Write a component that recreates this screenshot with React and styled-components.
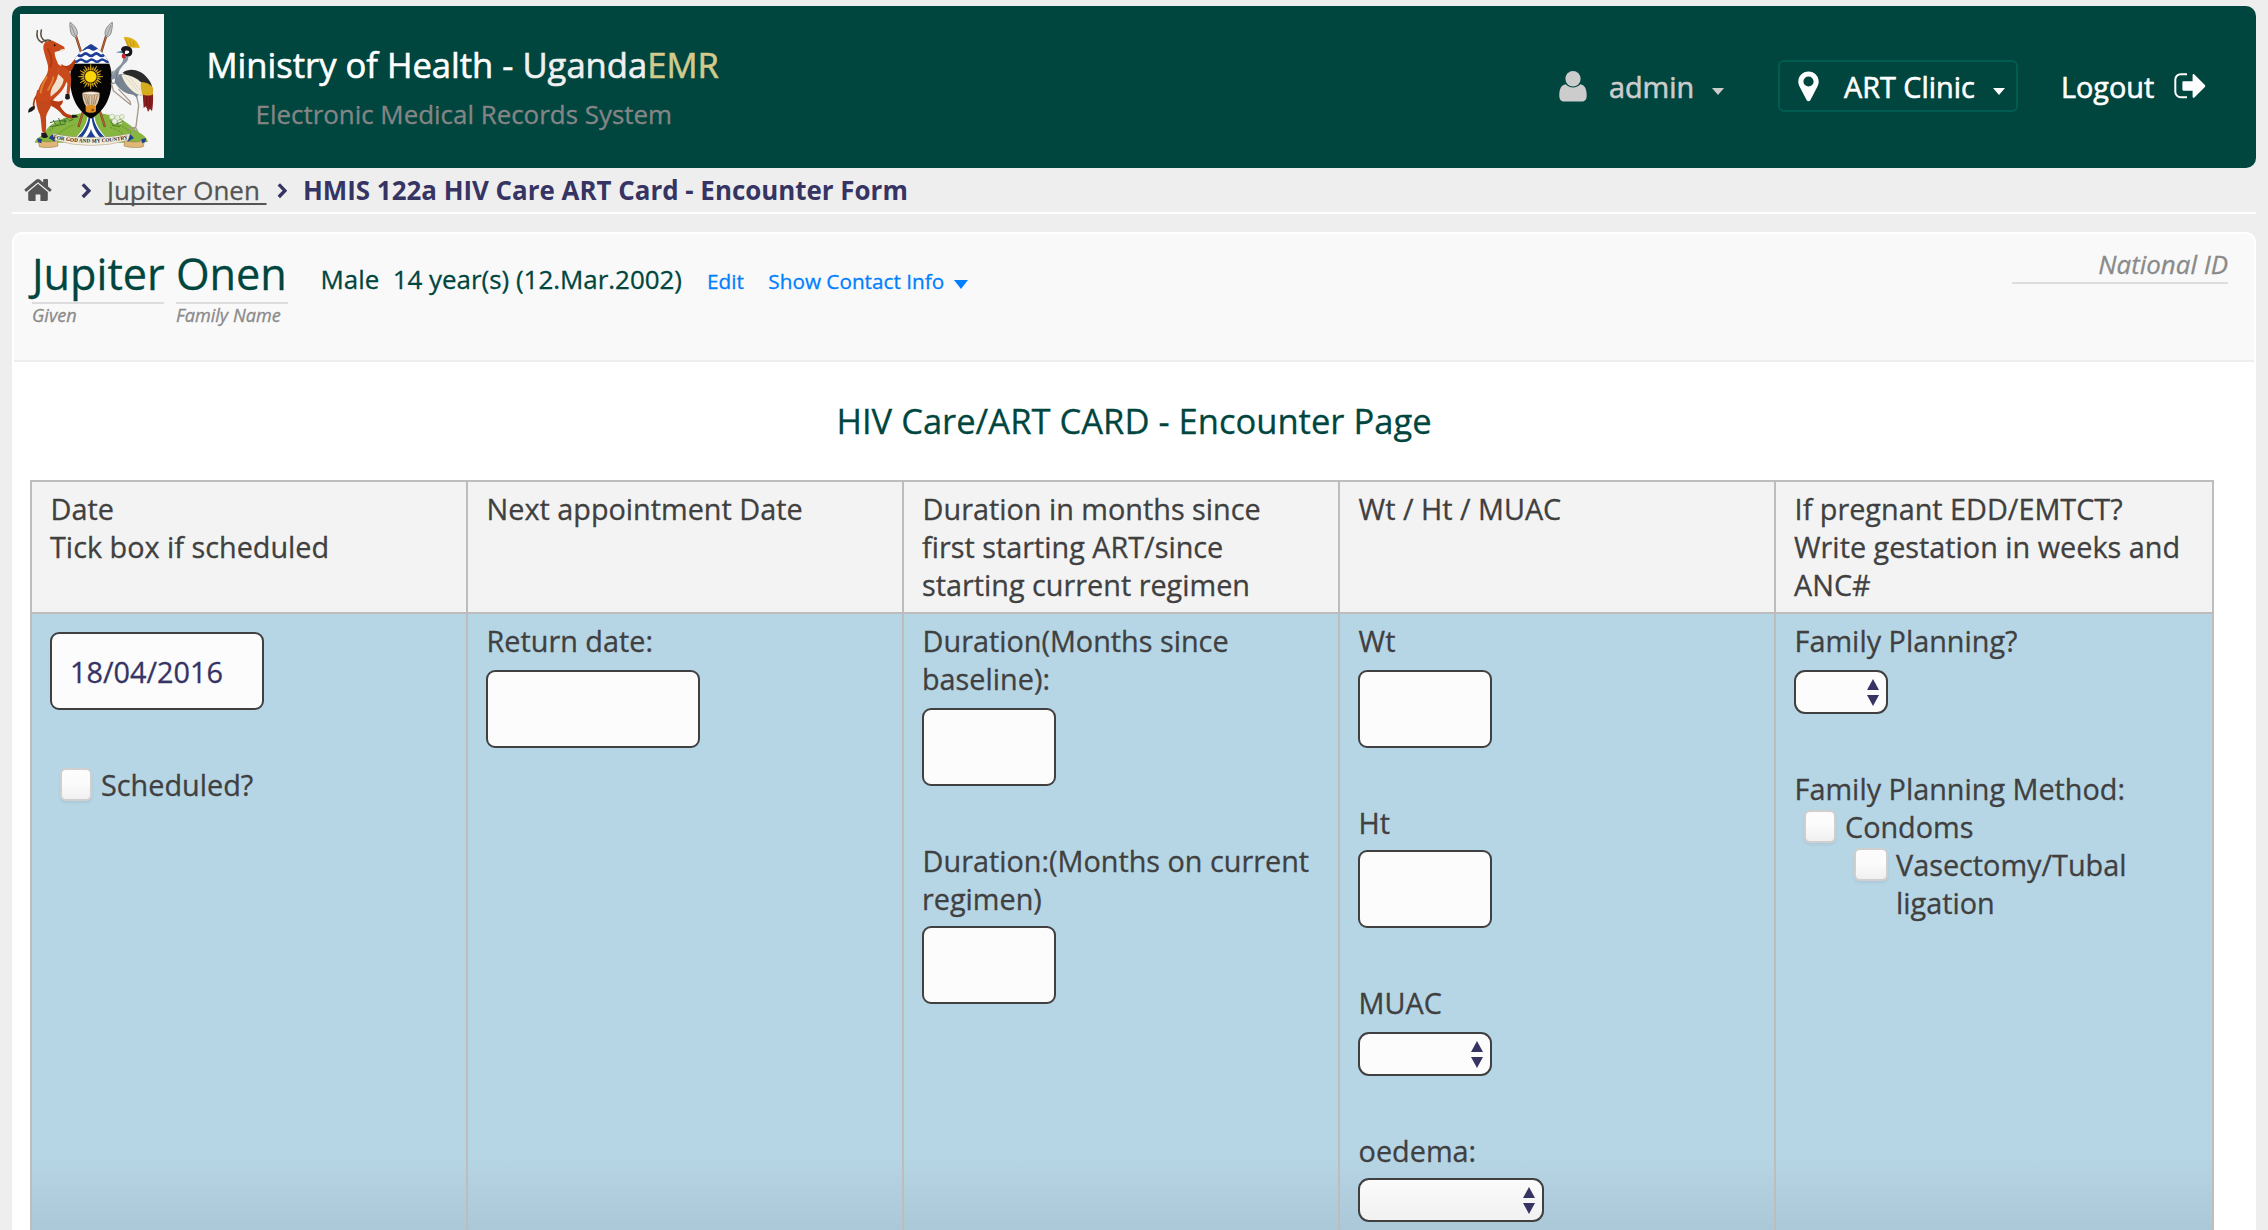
import React from 'react';
import styled, { createGlobalStyle } from 'styled-components';

const c = {
  green: '#00463f',
  ink: '#404040',
  navy: '#363463',
  line: '#bdbdbd',
  link: '#007fff',
  muted: '#8a8a8a',
};

const GlobalStyle = createGlobalStyle`
  * { box-sizing: border-box; }
  html, body { margin: 0; padding: 0; background: #eeeeee; }
  body {
    height: 1230px;
    overflow: hidden;
    font-family: "Open Sans", "Noto Sans", sans-serif;
    font-size: 28.8px;
    line-height: 38px;
    color: ${c.ink};
    -webkit-text-stroke: 0.3px currentColor;
  }
`;

const Page = styled.div`
  display: flex;
  flex-direction: column;
  height: 1230px;
  padding: 6px 12px 0;
  overflow: hidden;
`;

/* ---------- header ---------- */

const Header = styled.header`
  display: flex;
  flex: none;
  height: 162px;
  padding: 8px 50px 0 8px;
  border-radius: 10px;
  background: ${c.green};
`;

const Logo = styled.div`
  width: 144px;
  height: 144px;
  background: #f5f5f5;
  -webkit-text-stroke: 0;
  svg { display: block; }
`;

const Brand = styled.div`
  flex: 1;
  padding: 25px 0 0 42.5px;
`;

const BrandTitle = styled.h1`
  margin: 0;
  font-size: 34.6px;
  font-weight: 400;
  line-height: 52px;
  color: #ffffff;
  white-space: nowrap;
  -webkit-text-stroke-width: 0.6px;
`;

const BrandWord = styled.span`
  color: ${(p) => (p.$gold ? '#d3ca8c' : '#f0f0f0')};
`;

const BrandSub = styled.div`
  padding-left: 49px;
  font-size: 25.92px;
  line-height: 46px;
  color: #858585;
`;

const UserNav = styled.nav`
  display: flex;
  align-items: center;
  height: 52px;
  margin-top: 46px;
  color: #ffffff;
  white-space: nowrap;
  -webkit-text-stroke-width: 0.6px;
`;

const UserName = styled.div`
  display: flex;
  align-items: center;
  margin-right: 54px;
  color: #cccccc;
`;

const Location = styled.div`
  display: flex;
  align-items: center;
  width: 240px;
  height: 52px;
  margin-right: 43px;
  padding-left: 18px;
  border: 2px solid #005c51;
  border-radius: 6px;
`;

const Logout = styled.div`
  display: flex;
  align-items: center;
`;

const NavText = styled.span`
  width: ${(p) => p.$w}px;
  margin-left: ${(p) => p.$ml || 0}px;
  padding-top: 2px;
  font-size: 28.8px;
  line-height: 50px;
`;

const Spacer = styled.span`
  width: ${(p) => p.$w}px;
`;

const Caret = styled.span`
  width: 0;
  height: 0;
  margin: ${(p) => p.$m};
  border: solid transparent;
  border-width: ${(p) => `${p.$h}px ${p.$half}px 0`};
  border-top-color: ${(p) => p.$color || 'currentColor'};
`;

/* ---------- breadcrumbs ---------- */

const Crumbs = styled.nav`
  display: flex;
  align-items: center;
  flex: none;
  height: 46px;
  padding: 0 0 0 12px;
  border-bottom: 2px solid #ffffff;
  font-size: 25.92px;
  svg { display: block; flex: none; }
`;

const CrumbLink = styled.span`
  width: 160px;
  margin: 0 10px 0 16px;
  line-height: 34px;
  height: 34px;
  white-space: pre;
  color: #555555;
  text-decoration: underline;
  text-decoration-thickness: 2px;
  text-underline-offset: 3px;
  text-decoration-skip-ink: none;
`;

const CrumbCurrent = styled.strong`
  margin-left: 16px;
  line-height: 34px;
  font-weight: 700;
  color: ${c.navy};
  -webkit-text-stroke-width: 0;
`;

/* ---------- patient ---------- */

const Panel = styled.main`
  display: flex;
  flex-direction: column;
  flex: none;
  height: 1016px;
  margin-top: 18px;
  border: 2px solid #ffffff;
  border-radius: 10px 10px 0 0;
  background: #ffffff;
  overflow: hidden;
`;

const Patient = styled.section`
  display: flex;
  flex: none;
  height: 128px;
  padding: 0 26px 0 18px;
  border-bottom: 2px solid #eeeeee;
  background: #f9f9f9;
  color: ${c.green};
`;

const NamePart = styled.div`
  width: ${(p) => p.$w}px;
  margin-right: ${(p) => p.$mr}px;
  white-space: nowrap;
`;

const NameValue = styled.div`
  height: 70px;
  padding-top: 9.5px;
  border-bottom: 2px solid #dddddd;
  font-size: 43.2px;
  line-height: 60px;
`;

const NameCaption = styled.div`
  font-size: 18.14px;
  font-style: italic;
  line-height: 22px;
  color: ${c.muted};
`;

const Facts = styled.div`
  display: flex;
  align-items: baseline;
  height: 50px;
  margin-top: 20px;
  font-size: 25.92px;
  line-height: 50px;
  white-space: pre;
`;

const ActionLink = styled.a`
  margin-left: ${(p) => p.$ml}px;
  font-size: 20.74px;
  color: ${c.link};
`;

const NationalId = styled.div`
  width: 216px;
  height: 50px;
  margin-left: auto;
  padding-top: 12px;
  border-bottom: 2px solid #dddddd;
  font-size: 25.92px;
  font-style: italic;
  line-height: 36px;
  text-align: right;
  color: ${c.muted};
`;

/* ---------- form ---------- */

const FormTitle = styled.h2`
  margin: 34px 0 0;
  height: 84px;
  font-size: 34.56px;
  font-weight: 400;
  line-height: 50px;
  text-align: center;
  color: ${c.green};
`;

const Table = styled.div`
  display: grid;
  grid-template-columns: repeat(4, 436px) 440px;
  grid-template-rows: 132px 620px;
  width: 2184px;
  margin-left: 16px;
  border-top: 2px solid ${c.line};
`;

const Cell = styled.div`
  padding: 8px 16px 0 18px;
  border-left: 2px solid ${c.line};
  white-space: pre-line;
  &:nth-child(5n) { border-right: 2px solid ${c.line}; }
`;

const HeadCell = styled(Cell)`
  border-bottom: 2px solid ${c.line};
  background: #f3f3f3;
`;

const BodyCell = styled(Cell)`
  background: linear-gradient(#b6d5e5 0 540px, #abc8d8 616px);
`;

const Line = styled.span`
  padding-left: 0.6px;
`;

const Field = styled.div`
  margin-bottom: 56px;
`;

const Input = styled.input`
  display: block;
  width: ${(p) => p.$w}px;
  height: 78px;
  margin: ${(p) => p.$gap || 10}px 0 0;
  padding: 0 18px;
  border: 2px solid ${c.ink};
  border-radius: 9px;
  background: #fcfcfc;
  font: 28.8px "Open Sans", "Noto Sans", sans-serif;
  color: ${c.navy};
  outline: none;
`;

const SelectBox = styled.div`
  display: flex;
  flex-direction: column;
  align-items: flex-end;
  justify-content: center;
  gap: 5px;
  width: ${(p) => p.$w}px;
  height: 44px;
  margin-top: ${(p) => p.$gap || 10}px;
  padding-right: 7px;
  border: 2px solid ${c.ink};
  border-radius: 11px;
  background: ${(p) => (p.$shaded ? 'linear-gradient(#fbfbfb, #f1f1f1)' : '#fcfcfc')};
`;

const Arrow = styled.span`
  width: 0;
  height: 0;
  border: solid transparent;
  border-width: ${(p) => (p.$up ? '0 6.5px 11px' : '11px 6.5px 0')};
  ${(p) => (p.$up ? 'border-bottom-color' : 'border-top-color')}: ${c.navy};
`;

const Check = styled.label`
  display: flex;
  align-items: flex-start;
  gap: ${(p) => p.$gap || 9}px;
  padding-left: ${(p) => p.$indent || 10}px;
`;

const Box = styled.span`
  flex: none;
  width: ${(p) => p.$w || 32}px;
  height: 33px;
  margin-top: 2px;
  border: 2px solid #cfcfcf;
  border-radius: 6px;
  background: linear-gradient(#fcfcfc 40%, #f0f0f0);
  box-shadow: 0 2px 3px rgba(0, 0, 0, 0.06);
`;

/* ---------- drawings ---------- */

const UserIcon = () => (
  <svg width="28" height="31" viewBox="0 0 28 31" fill="#cccccc">
    <ellipse cx="14" cy="7.8" rx="7.6" ry="7.8" />
    <path d="M6.6 13.2C2 13.8.3 18.500.3 24.500c0 3.800 1.500 6 4.700 6h18c3.200 0 4.700-2.200 4.700-6 0-6-1.700-10.700-6.300-11.300-1.800 2-4.300 3.200-7.400 3.200s-5.600-1.200-7.400-3.200z" />
  </svg>
);

const PinIcon = () => (
  <svg width="21" height="31" viewBox="0 0 21 31" fill="#ffffff">
    <path fillRule="evenodd" d="M10.500.5C4.700.5.3 5 .3 10.500c0 1.800.4 3.200 1.100 4.700l7.300 14c.8 1.500 2.800 1.500 3.600 0l7.300-14c.7-1.500 1.100-2.900 1.100-4.700C20.700 5 16.300.5 10.500.5zm0 4.900a5.100 5.100 0 1 1 0 10.200 5.100 5.100 0 0 1 0-10.200z" />
  </svg>
);

const LogoutIcon = () => (
  <svg width="32" height="26" viewBox="0 0 32 26">
    <path d="M13 1.200H6.800A5.400 5.400 0 0 0 1.300 6.700v12A5.400 5.400 0 0 0 6.800 24.200H13" fill="none" stroke="#ffffff" strokeWidth="2" />
    <path d="M18.600 2.200v6H9.500c-.7 0-1.100.5-1.100 1.200v7.200c0 .7.4 1.200 1.100 1.200h9.100v6c0 1.200 1 1.500 1.800.7L30.900 13.900c.5-.5.5-1.300 0-1.800L20.400 1.500c-.8-.8-1.800-.5-1.800.7z" fill="#ffffff" />
  </svg>
);

const HomeIcon = () => (
  <svg width="28" height="24" viewBox="0 0 28 24" fill="#555555">
    <path d="M14 5.800 4.200 14v7.800c0 .7.500 1.200 1.200 1.200h6.200v-6.600h4.800V23h6.200c.7 0 1.200-.5 1.200-1.200V14z" />
    <path d="M27.300 11.200 24 8.400V1.800c0-.4-.3-.7-.7-.7h-3.400c-.4 0-.7.3-.7.7v2.700L15.700 1.600c-1-.8-2.400-.8-3.400 0L.7 11.200c-.3.300-.3.700-.1 1l1.100 1.300c.2.300.7.300 1 .1L14 4.200l11.300 9.400c.3.200.8.200 1-.1l1.100-1.300c.2-.3.200-.7-.1-1z" />
  </svg>
);

const Chevron = () => (
  <svg width="10" height="17" viewBox="0 0 10 17">
    <path d="M1.800 2.300 7.900 8.700 1.800 15" fill="none" stroke={c.navy} strokeWidth="3.400" strokeLinecap="butt" />
  </svg>
);

const rays = Array.from({ length: 24 }, (_, i) => {
  const a = (i * Math.PI) / 12;
  const r = i % 2 ? 31 : 37;
  const p = (rad, ang) => `${(272 + rad * Math.cos(ang)).toFixed(1)},${(230 + rad * Math.sin(ang)).toFixed(1)}`;
  return `${p(21, a - 0.09)} ${p(r, a)} ${p(21, a + 0.09)}`;
});

const CoatOfArms = () => (
  <svg width="144" height="144" viewBox="60 42 432 432">
    <defs>
      <clipPath id="shield">
        <path d="M273 132c22 12 44 34 54 56 12 30 12 74-2 108-10 26-28 46-52 60-24-14-42-34-52-60-14-34-14-78-2-108 10-22 32-44 54-56z" />
      </clipPath>
      <path id="motto" d="M160 416Q272 440 388 416" />
    </defs>

    {/* mound */}
    <path d="M104 428c4-12 14-18 28-24 6-14 12-24 26-32 22-14 42-22 62-28 30-8 80-8 104 0 24 4 44 14 58 26 12 8 22 18 32 26 14 6 24 14 30 30l-66 2H170z" fill="#86b540" />
    <path d="M150 392c16-16 40-30 66-36M176 402c14-14 30-22 48-28M330 382c16 4 28 10 36 18M350 372c20 6 32 16 42 26" fill="none" stroke="#679a2c" strokeWidth="4" strokeDasharray="5 4" />
    <path d="M150 368c18-6 34-8 50-4M160 360l8 14M176 354l6 18M192 356l4 14M150 380l46-8M210 350l-14 8M206 364l14-6" fill="none" stroke="#3c7230" strokeWidth="3" />
    <g fill="#e9f0dc" stroke="#9fae8c" strokeWidth="1.500">
      <circle cx="336" cy="350" r="8" /><circle cx="352" cy="354" r="8" /><circle cx="366" cy="350" r="7" />
      <circle cx="344" cy="364" r="8" /><circle cx="360" cy="366" r="7" />
    </g>
    <path d="M330 362l12 16M350 372l18-8M336 376l24 4" stroke="#4f7d2c" strokeWidth="3" />

    {/* spears */}
    <path d="M227 106 314 378M319 106 236 378" stroke="#7a3d1c" strokeWidth="7" strokeLinecap="round" />
    <path d="M227 106 314 378M319 106 236 378" stroke="#b9653a" strokeWidth="3.500" strokeLinecap="round" />
    <g fill="#c4c4c4" stroke="#666666" strokeWidth="2">
      <path d="M210 67c11 6 21 19 22 31 0 8-3 12-5 14-6-2-13-6-15-16-2-10-3-20-2-29z" />
      <path d="M337 67c-11 6-21 19-22 31 0 8 3 12 4 14 6-2 13-6 15-16 2-10 4-20 3-29z" />
    </g>
    <path d="M214 76 226 108M333 76 320 108" stroke="#7c7c7c" strokeWidth="2" />

    {/* river */}
    <path d="M262 352h22c4 24 16 42 36 62h-94c20-20 32-38 36-62z" fill="#ffffff" />
    <g fill="#1f3f92">
      <path d="M266 350h5c-1 26-12 48-27 64h-14c20-20 32-38 36-64z" />
      <path d="M275 350h5c4 26 17 44 36 64h-14c-15-16-26-38-27-64z" />
      <path d="M273 386c2 10 8 18 16 28h-32c8-10 14-18 16-28z" />
    </g>

    {/* shield */}
    <g clipPath="url(#shield)">
      <rect x="200" y="125" width="145" height="235" fill="#050505" />
      <rect x="200" y="125" width="145" height="66" fill="#ffffff" />
      <path d="M230 125h90v24q-8 6-16 0t-16 0-16 0-16 0-16 0-10 0z" fill="#1d3f97" />
      <g fill="none" stroke="#1d3f97">
        <path d="M217 164q8-7 16 0t16 0 16 0 16 0 16 0 16 0 16 0 16 0" strokeWidth="8" />
        <path d="M203 182q8-7 16 0t16 0 16 0 16 0 16 0 16 0 16 0 16 0 16 0" strokeWidth="7" />
      </g>
      {rays.map((r) => <polygon key={r} points={r} fill="#e6b422" stroke="#e6b422" strokeWidth="1.500" />)}
      <circle cx="272" cy="230" r="17.500" fill="#fbd50c" stroke="#c39a12" strokeWidth="1.500" />
      <path d="M257 306h31v28c-6 6-25 6-31 0z" fill="#e08f1e" />
      <path d="M247 281c0 14 4 28 12 38 8-6 20-6 28 0 8-10 12-24 12-38z" fill="#dccbb0" />
      <path d="M252 286l9 28M259 286l6 28M267 288v26M276 288l-1 26M284 286l-4 28M292 286l-8 28" stroke="#8a5c30" strokeWidth="2" />
      <circle cx="278" cy="330" r="4" fill="#8a4a10" />
      <ellipse cx="273" cy="280" rx="26" ry="5" fill="#f4ecdf" stroke="#93704a" strokeWidth="2" />
    </g>

    {/* antelope: tail, hind legs, torso, neck and head, forelegs, horns */}
    <path d="M120 276c-16 14-22 32-18 50" fill="none" stroke="#a63a10" strokeWidth="5" strokeLinecap="round" />
    <path d="M104 318c2 8-4 16-19 20-2-10 6-18 19-20z" fill="#1c1a1c" />
    <path d="M112 270c-8 24-4 50 8 74 4 20 4 34 6 50l10 8c4-18 2-34 2-50 2-14 10-22 16-36l4-40z" fill="#c4471a" />
    <path d="M150 296c14 8 28 12 38 4 2 8-2 14-8 18 4 8 12 16 18 22 8 4 16 6 28 8l-4 6c-14 2-26-2-34-8-8-12-20-22-34-28z" fill="#b83c12" />
    <path d="M134 128c6-6 16-6 24-6 12 6 24 12 34 18 4 6 2 12-6 12-10 0-18 2-22 5 0 14 6 24 10 34 12 14 28 34 26 50-4 26-26 44-40 58-16 6-34 8-46 2-6-22 4-44 18-64 10-14 14-26 12-40-4-16-10-32-13-46-2-10-1-18 3-23z" fill="#c9491b" />
    <path d="M176 204c12 10 18 24 14 40-6 22-24 36-38 46-2-16 4-28 12-40 8-14 12-30 12-46z" fill="#f2e0cc" />
    <path d="M144 148c10 18 14 34 8 52" fill="none" stroke="#b03a12" strokeWidth="6" strokeLinecap="round" />
    <path d="M140 232c-10 14-16 30-18 46M160 232c-2 16-10 28-16 38" fill="none" stroke="#e07f30" strokeWidth="6" strokeLinecap="round" />
    <path d="M184 192c10 8 18 8 28 0l12-14 4 6-12 26c-8 8-18 8-30 2z" fill="#b53c12" />
    <path d="M176 196c14 2 26 10 34 22 4 12 4 24 2 38l-4 26h-8c0-14 2-22 2-32-8-10-18-20-28-28z" fill="#c9491b" />
    <path d="M197 282h11l2 12c-4 6-12 6-15 0z" fill="#1c1a1c" />
    <path d="M124 398h14l6 12c-6 6-16 4-20 0zM216 344l14 2 4 6-18 2z" fill="#1c1a1c" />
    <path d="M126 128c-12-6-18-18-14-36M138 124c-14-6-18-18-14-34" fill="none" stroke="#574c38" strokeWidth="4.500" strokeLinecap="round" />
    <path d="M126 126c10-6 18-8 26-4" fill="none" stroke="#574c38" strokeWidth="4" strokeLinecap="round" />
    <circle cx="164" cy="136" r="3" fill="#201510" />
    <path d="M180 149l14-3-3 8-11 2z" fill="#f3e6d8" />

    {/* crane: legs, tail, body, neck, head, crest */}
    <path d="M408 280l8 36-8 64M404 382l-20 4M406 382l8 14M404 382l-6 16M334 250l6 22 52 42-2-10-34-36" fill="none" stroke="#a8998a" strokeWidth="4" strokeLinecap="round" strokeLinejoin="round" />
    <path d="M428 280c10 6 22 4 31 0 1 20 0 38-3 54l-6-8-6 10-5-18-8 6z" fill="#8b1d1e" />
    <path d="M440 286v38M450 286v34" stroke="#5e1012" strokeWidth="2" />
    <path d="M350 226c16-8 34-6 48 2 18 12 26 34 26 60-8-6-12-4-14 6-6-10-16-12-24-12-18-6-36-20-42-38z" fill="#77838f" />
    <path d="M368 218c22-16 54-8 72 14 8 8 14 18 17 30-26-4-50-22-89-44z" fill="#2b2a2a" />
    <path d="M364 224c28-2 50 14 70 32l-12 30c-22-6-46-28-58-62z" fill="#f2ecdc" />
    <path d="M384 226l36 44M374 228l40 46" stroke="#d6ccb6" strokeWidth="2" />
    <path d="M424 246c18 2 30 8 36 20l-2 18c-12 4-22 4-32-2-2-14-6-24-2-36z" fill="#d6ab1c" />
    <path d="M382 166c10 14-8 24-16 34-8 8-12 18-10 32l-22 8c2-22 14-34 26-44 8-8 12-18 8-30z" fill="#87939e" />
    <path d="M340 212c-6 12-8 26-4 38l20-2M352 214l-6 30" fill="none" stroke="#6c7883" strokeWidth="3" />
    <path d="M371 112c20-4 44 10 48 32l-36-2z" fill="#dfb31b" />
    <path d="M376 116l10 24M388 118l6 22M400 124l2 18" stroke="#b98c10" strokeWidth="2" />
    <path d="M363 148c2-12 24-14 32-2 4 8 2 18-4 22-10 4-24-2-28-20z" fill="#17181c" />
    <path d="M347 157l18-5 2 8z" fill="#4b8bb0" />
    <path d="M376 152c8-2 13 1 11 6-4 4-9 5-13 3z" fill="#ffffff" />
    <ellipse cx="371" cy="168" rx="6" ry="7.500" fill="#c8222c" />

    {/* scroll */}
    <path d="M114 418c18 10 38 10 58 2l2 18c-18 6-42 6-56 2z" fill="#e0b778" stroke="#93713f" strokeWidth="1.500" />
    <path d="M434 418c-18 10-40 10-60 2l-2 18c18 6 44 6 58 2z" fill="#e0b778" stroke="#93713f" strokeWidth="1.500" />
    <path d="M112 414l14 4-2 12-10-4zM438 414l-14 4 2 12 10-4z" fill="#1f3f92" />
    <path d="M158 402l-12 12 20 12zM390 402l12 12-20 12z" fill="#1f3f92" />
    <path d="M158 401Q272 424 390 401l-6 20Q272 452 166 421z" fill="#f5eddb" stroke="#a3947a" strokeWidth="1.500" />
    <text fontFamily="Liberation Serif, serif" fontWeight="700" fontSize="16.500" fill="#2a2622">
      <textPath href="#motto" textLength="226" lengthAdjust="spacingAndGlyphs">FOR GOD AND MY COUNTRY</textPath>
    </text>
  </svg>
);

/* ---------- form parts ---------- */

const Select = (props) => (
  <SelectBox {...props}>
    <Arrow $up />
    <Arrow />
  </SelectBox>
);

const headings = [
  'Date\nTick box if scheduled',
  'Next appointment Date',
  'Duration in months since\nfirst starting ART/since\nstarting current regimen',
  'Wt / Ht / MUAC',
  'If pregnant EDD/EMTCT?\nWrite gestation in weeks and\nANC#',
];

export default function App() {
  return (
    <Page>
      <GlobalStyle />
      <Header>
        <Logo><CoatOfArms /></Logo>
        <Brand>
          <BrandTitle>
            Ministry of Health - <BrandWord>Uganda</BrandWord><BrandWord $gold>EMR</BrandWord>
          </BrandTitle>
          <BrandSub>Electronic Medical Records System</BrandSub>
        </Brand>
        <UserNav>
          <UserName>
            <UserIcon />
            <NavText $w={86} $ml={22}>admin</NavText>
            <Caret $h={7} $half={6.5} $m="11px 0 0 17px" />
          </UserName>
          <Location>
            <PinIcon />
            <NavText $w={131} $ml={25}>ART Clinic</NavText>
            <Caret $h={7} $half={6.5} $m="11px 0 0 18px" />
          </Location>
          <Logout>
            <NavText $w={95}>Logout</NavText>
            <Spacer $w={18} />
            <LogoutIcon />
          </Logout>
        </UserNav>
      </Header>

      <Crumbs>
        <HomeIcon />
        <Spacer $w={29} />
        <Chevron />
        <CrumbLink>{'Jupiter Onen '}</CrumbLink>
        <Chevron />
        <CrumbCurrent>HMIS 122a HIV Care ART Card - Encounter Form</CrumbCurrent>
      </Crumbs>

      <Panel>
        <Patient>
          <NamePart $w={132} $mr={12}>
            <NameValue>Jupiter</NameValue>
            <NameCaption>Given</NameCaption>
          </NamePart>
          <NamePart $w={112} $mr={32.5}>
            <NameValue>Onen</NameValue>
            <NameCaption>Family Name</NameCaption>
          </NamePart>
          <Facts>
            <span>{'Male  14 year(s) (12.Mar.2002)'}</span>
            <ActionLink $ml={25}>Edit</ActionLink>
            <ActionLink $ml={24.5}>Show Contact Info</ActionLink>
            <Caret $h={9} $half={7.5} $color={c.link} $m="0 0 0 10px" style={undefined} />
          </Facts>
          <NationalId>National ID</NationalId>
        </Patient>

        <FormTitle>HIV Care/ART CARD - Encounter Page</FormTitle>

        <Table>
          {headings.map((h) => <HeadCell key={h}><Line>{h}</Line></HeadCell>)}

          <BodyCell>
            <Field><Input $w={214} defaultValue="18/04/2016" /></Field>
            <Check><Box />Scheduled?</Check>
          </BodyCell>

          <BodyCell>
            <Field><Line>Return date:</Line><Input $w={214} /></Field>
          </BodyCell>

          <BodyCell>
            <Field><Line>{'Duration(Months since\nbaseline):'}</Line><Input $w={134} /></Field>
            <Field><Line>{'Duration:(Months on current\nregimen)'}</Line><Input $w={134} $gap={8} /></Field>
          </BodyCell>

          <BodyCell>
            <Field><Line>Wt</Line><Input $w={134} /></Field>
            <Field><Line>Ht</Line><Input $w={134} $gap={8} /></Field>
            <Field><Line>MUAC</Line><Select $w={134} /></Field>
            <Field><Line>oedema:</Line><Select $w={186} $gap={8} $shaded /></Field>
          </BodyCell>

          <BodyCell>
            <Field><Line>Family Planning?</Line><Select $w={94} /></Field>
            <Line>Family Planning Method:</Line>
            <Check><Box />Condoms</Check>
            <Check $indent={60} $gap={8}><Box $w={34} />{'Vasectomy/Tubal\nligation'}</Check>
          </BodyCell>
        </Table>
      </Panel>
    </Page>
  );
}
